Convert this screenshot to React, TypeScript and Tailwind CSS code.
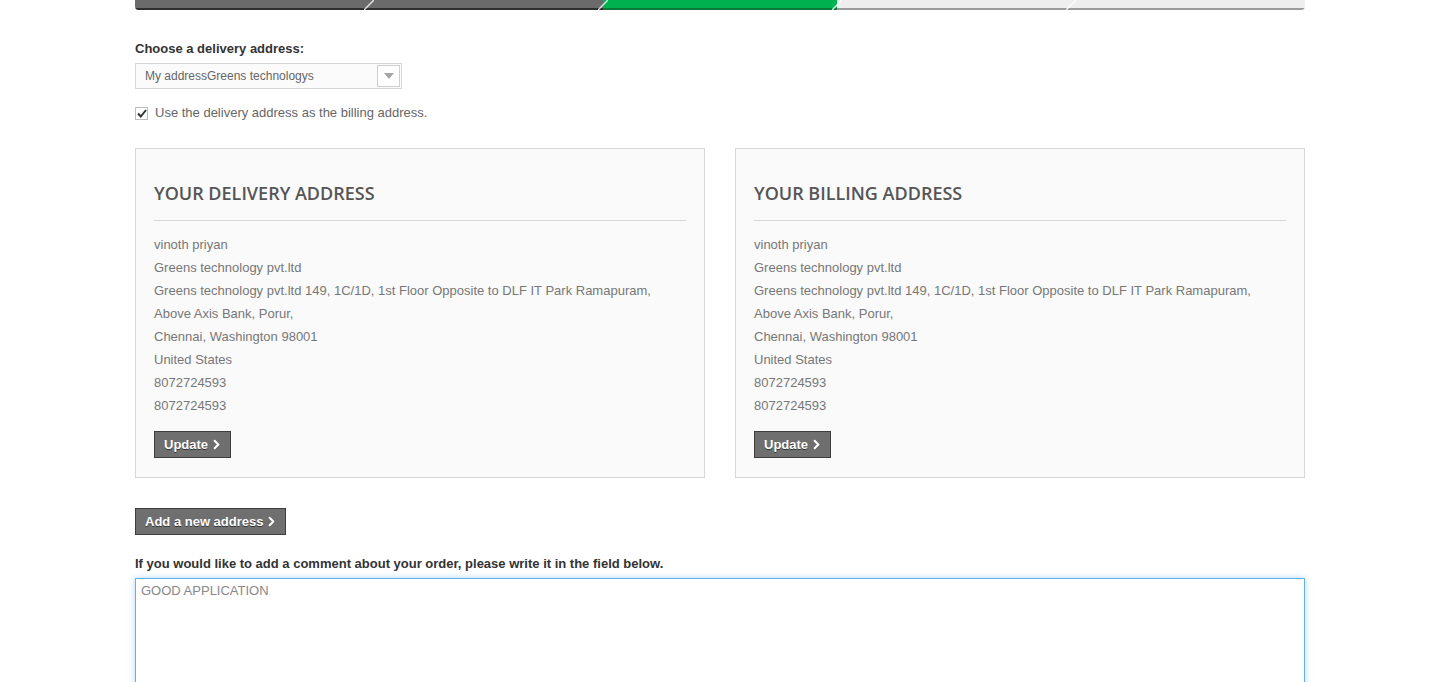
import { ChevronRight } from "lucide-react";

const steps = [
  { bg: "bg-[#6b6b6b]", border: "border-[#2f2f2f]" },
  { bg: "bg-[#6b6b6b]", border: "border-[#2f2f2f]" },
  { bg: "bg-[#00b14f]", border: "border-[#0a7a36]" },
  { bg: "bg-[#eeeeee]", border: "border-[#9a9a9a]" },
  { bg: "bg-[#eeeeee]", border: "border-[#9a9a9a]" },
];

const addressLines = [
  "vinoth priyan",
  "Greens technology pvt.ltd",
  "Greens technology pvt.ltd 149, 1C/1D, 1st Floor Opposite to DLF IT Park Ramapuram,",
  "Above Axis Bank, Porur,",
  "Chennai, Washington 98001",
  "United States",
  "8072724593",
  "8072724593",
];

function GrayButton({ label }: { label: string }) {
  return (
    <button className="flex h-[27px] items-center gap-[1px] border border-[#3d3d3d] bg-[#6f6f6f] pl-[9px] pr-[6px] text-[13px] font-bold text-white [text-shadow:0_1px_0_#333]">
      {label}
      <ChevronRight size={15} strokeWidth={3.2} />
    </button>
  );
}

function AddressBox({ title }: { title: string }) {
  return (
    <div className="h-[330px] border border-[#d6d6d6] bg-[#fafafa] px-[18px] pt-[32px]">
      <h3 className="border-b border-[#d6d6d6] pb-[15px] font-['Open_Sans',sans-serif] text-[18px] font-semibold leading-[24px] text-[#555]">
        {title}
      </h3>
      <ul className="mt-[12px] text-[13px] leading-[23px] text-[#777]">
        {addressLines.map((line, i) => (
          <li key={i}>{line}</li>
        ))}
      </ul>
      <div className="mt-[14px] flex">
        <GrayButton label="Update" />
      </div>
    </div>
  );
}

export default function App() {
  return (
    <div className="min-h-[682px] bg-white font-['Liberation_Sans',Arial,sans-serif]">
      <div className="mx-auto w-[1170px]">
        {/* order steps, only the bottom edge shows */}
        <div className="flex h-[10px] overflow-hidden rounded-b-[4px]">
          {steps.map((s, i) => (
            <div key={i} className={`relative flex-1 border-b-2 ${s.bg} ${s.border}`}>
              {i > 0 && (
                <svg className="absolute -left-[5px] top-0" width="10" height="10" viewBox="0 0 10 10">
                  <line x1="0" y1="10" x2="10" y2="0" stroke="#ffffff" strokeWidth="1.5" opacity="0.8" />
                </svg>
              )}
            </div>
          ))}
        </div>

        <p className="mt-[31px] text-[13px] font-bold leading-[16px] text-[#333]">
          Choose a delivery address:
        </p>
        <div className="mt-[6px] flex h-[26px] w-[267px] items-center justify-between border border-[#d6d6d6] bg-[#fbfbfb] pl-[9px] pr-[1px]">
          <span className="text-[12px] text-[#666]">My addressGreens technologys</span>
          <span className="flex h-[22px] w-[23px] items-center justify-center border border-[#cfcfcf] bg-white">
            <svg width="10" height="6" viewBox="0 0 10 6">
              <path d="M0 0h10L5 6z" fill="#a6a6a6" />
            </svg>
          </span>
        </div>

        <label className="mt-[16px] flex items-center gap-[7px] text-[13px] leading-[16px] text-[#666]">
          <span className="flex h-[13px] w-[13px] items-center justify-center border border-[#bdbdbd] bg-white">
            <svg width="10" height="9" viewBox="0 0 10 9">
              <path d="M1 4.5l2.8 3L9 1" fill="none" stroke="#333" strokeWidth="2" />
            </svg>
          </span>
          Use the delivery address as the billing address.
        </label>

        <div className="mt-[27px] grid grid-cols-2 gap-[30px]">
          <AddressBox title="YOUR DELIVERY ADDRESS" />
          <AddressBox title="YOUR BILLING ADDRESS" />
        </div>

        <div className="mt-[30px] flex">
          <GrayButton label="Add a new address" />
        </div>

        <p className="mt-[21px] text-[13px] font-bold leading-[16px] text-[#333]">
          If you would like to add a comment about your order, please write it in the field below.
        </p>
        <textarea
          defaultValue="GOOD APPLICATION"
          className="mt-[6px] block h-[150px] w-full resize-none border border-[#66afe9] px-[5px] py-[3px] text-[13px] leading-[18px] text-[#888] shadow-[0_0_6px_rgba(102,175,233,0.5)] outline-none"
        />
      </div>
    </div>
  );
}
